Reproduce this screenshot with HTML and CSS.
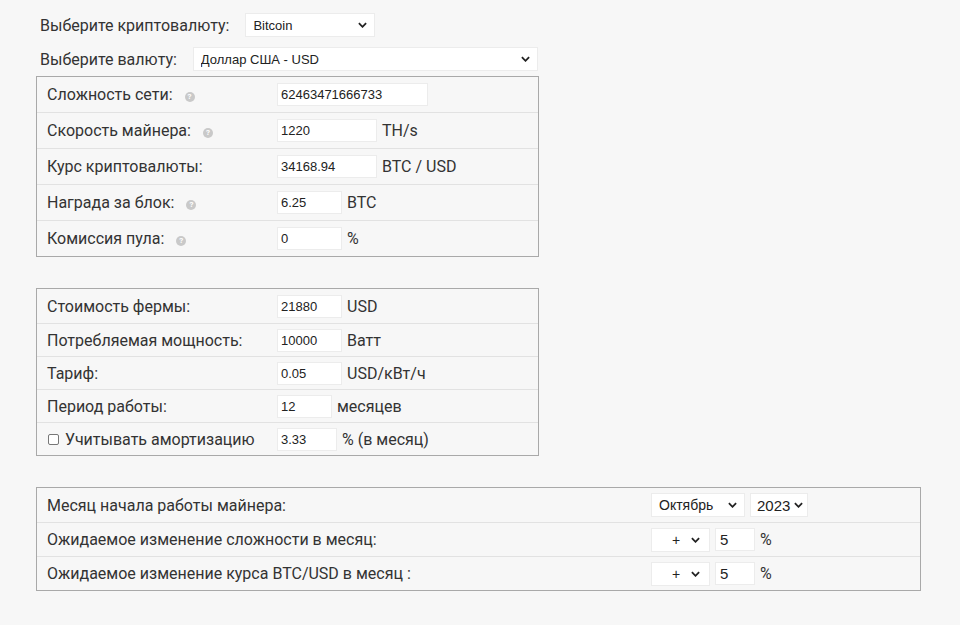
FILE: index.html
```html
<!DOCTYPE html>
<html lang="ru">
<head>
	<meta charset="UTF-8">
	<title>Калькулятор майнинга</title>
	<link rel="stylesheet" href="styles.css">
</head>
<body>
	<div class="pick">
		<label>Выберите криптовалюту:</label>
		<span class="sel sel-coin">
			<select><option>Bitcoin</option><option>Ethereum</option></select>
			<svg class="chev" viewBox="0 0 10 6"><path d="M1 1l4 4 4-4"/></svg>
		</span>
	</div>
	<div class="pick">
		<label>Выберите валюту:</label>
		<span class="sel sel-cur">
			<select><option>Доллар США - USD</option><option>Евро - EUR</option></select>
			<svg class="chev" viewBox="0 0 10 6"><path d="M1 1l4 4 4-4"/></svg>
		</span>
	</div>

	<div class="panel first">
		<div class="row">
			<div class="name">Сложность сети: <i class="help">?</i></div>
			<div class="val"><input class="w150" type="text" value="62463471666733"></div>
		</div>
		<div class="row">
			<div class="name">Скорость майнера: <i class="help">?</i></div>
			<div class="val"><input class="w100" type="text" value="1220"><span class="unit">TH/s</span></div>
		</div>
		<div class="row">
			<div class="name">Курс криптовалюты:</div>
			<div class="val"><input class="w100" type="text" value="34168.94"><span class="unit">BTC / USD</span></div>
		</div>
		<div class="row">
			<div class="name">Награда за блок: <i class="help">?</i></div>
			<div class="val"><input class="w65" type="text" value="6.25"><span class="unit">BTC</span></div>
		</div>
		<div class="row">
			<div class="name">Комиссия пула: <i class="help">?</i></div>
			<div class="val"><input class="w65" type="text" value="0"><span class="unit">%</span></div>
		</div>
	</div>

	<div class="panel second">
		<div class="row">
			<div class="name">Стоимость фермы:</div>
			<div class="val"><input class="w65" type="text" value="21880"><span class="unit">USD</span></div>
		</div>
		<div class="row">
			<div class="name">Потребляемая мощность:</div>
			<div class="val"><input class="w65" type="text" value="10000"><span class="unit">Ватт</span></div>
		</div>
		<div class="row">
			<div class="name">Тариф:</div>
			<div class="val"><input class="w65" type="text" value="0.05"><span class="unit">USD/кВт/ч</span></div>
		</div>
		<div class="row">
			<div class="name">Период работы:</div>
			<div class="val"><input class="w55" type="text" value="12"><span class="unit">месяцев</span></div>
		</div>
		<div class="row">
			<div class="name"><label class="check"><span class="box"></span>Учитывать амортизацию</label></div>
			<div class="val"><input class="w60" type="text" value="3.33"><span class="unit">% (в месяц)</span></div>
		</div>
	</div>

	<div class="panel third">
		<div class="row">
			<div class="name">Месяц начала работы майнера:</div>
			<div class="val">
				<span class="sel sel-month">
					<select><option>Октябрь</option><option>Ноябрь</option></select>
					<svg class="chev" viewBox="0 0 10 6"><path d="M1 1l4 4 4-4"/></svg>
				</span>
				<span class="sel sel-year">
					<select><option>2023</option><option>2024</option></select>
					<svg class="chev" viewBox="0 0 10 6"><path d="M1 1l4 4 4-4"/></svg>
				</span>
			</div>
		</div>
		<div class="row">
			<div class="name">Ожидаемое изменение сложности в месяц:</div>
			<div class="val">
				<span class="sel sel-sign">
					<select><option>+</option><option>-</option></select>
					<svg class="chev" viewBox="0 0 10 6"><path d="M1 1l4 4 4-4"/></svg>
				</span>
				<input class="w40 big" type="text" value="5"><span class="unit">%</span>
			</div>
		</div>
		<div class="row">
			<div class="name">Ожидаемое изменение курса BTC/USD в месяц :</div>
			<div class="val">
				<span class="sel sel-sign">
					<select><option>+</option><option>-</option></select>
					<svg class="chev" viewBox="0 0 10 6"><path d="M1 1l4 4 4-4"/></svg>
				</span>
				<input class="w40 big" type="text" value="5"><span class="unit">%</span>
			</div>
		</div>
	</div>
</body>
</html>
```

FILE: styles.css
```css
*{margin:0;padding:0;box-sizing:border-box;}
body{background:#f7f7f7;color:#333;font-family:Roboto,"Liberation Sans",Arial,sans-serif;font-size:16px;}

/* верхние выпадающие списки */
.pick{display:flex;align-items:center;height:24px;margin-left:40px;}
.pick:first-child{margin-top:13px;}
.pick + .pick{margin-top:10px;}
.pick label{margin-right:16px;}

.sel{position:relative;display:inline-block;height:24px;}
.sel select{appearance:none;-webkit-appearance:none;width:100%;height:100%;background:#fff;border:1px solid #ececec;border-radius:0;padding:0 20px 0 7px;font-family:"Liberation Sans",Arial,sans-serif;font-size:13px;color:#222;outline:none;}
.sel .chev{position:absolute;top:9px;right:8px;width:9px;height:6px;fill:none;stroke:#222;stroke-width:2;pointer-events:none;}
.sel-coin{width:130px;}
.sel-cur{width:345px;}
.sel-month{width:94px;}
.sel-month select{font-size:14px;}
.sel-year{width:58px;margin-left:5px;}
.sel-year select{font-size:15px;padding:0 14px 0 6px;}
.sel-year .chev{right:5px;}
.sel-sign{width:59px;}
.sel-sign select{padding-left:20px;font-size:14px;}
.sel-sign .chev{right:10px;}

/* блоки с полями */
.panel{margin-left:36px;border:1px solid #a9a9a9;}
.panel.first{width:503px;margin-top:5px;}
.panel.second{width:503px;margin-top:31px;}
.panel.third{width:885px;margin-top:31px;}

.row{display:grid;grid-template-columns:240px 1fr;align-items:center;height:36px;border-top:1px solid #e2e2e2;}
.row:first-child{border-top:0;height:35px;}
.second .row{height:33px;}
.second .row:first-child{height:34px;}
.third .row{grid-template-columns:614px 1fr;height:34px;}
.third .row:first-child{height:34px;}

.name{padding-left:10px;white-space:nowrap;}
.val{display:flex;align-items:center;}

.help{display:inline-block;width:10px;height:10px;margin-left:8px;border-radius:50%;background:#c9c9c9;color:#fff;font-style:normal;font-size:8px;line-height:10px;text-align:center;font-weight:bold;vertical-align:1px;}

input{height:23px;background:#fff;border:1px solid #ececec;padding:0 3px;font-family:"Liberation Sans",Arial,sans-serif;font-size:13px;color:#222;outline:none;}
input.big{font-size:15px;padding-left:4px;margin-left:5px;}
.w150{width:151px;}
.w100{width:100px;}
.w65{width:65px;}
.w60{width:60px;}
.w55{width:55px;}
.w40{width:40px;}
.unit{margin-left:5px;}

.check{display:flex;align-items:center;}
.check .box{width:11px;height:11px;border:1px solid #777;border-radius:2px;background:#fff;margin:0 6px 0 1px;}
```
